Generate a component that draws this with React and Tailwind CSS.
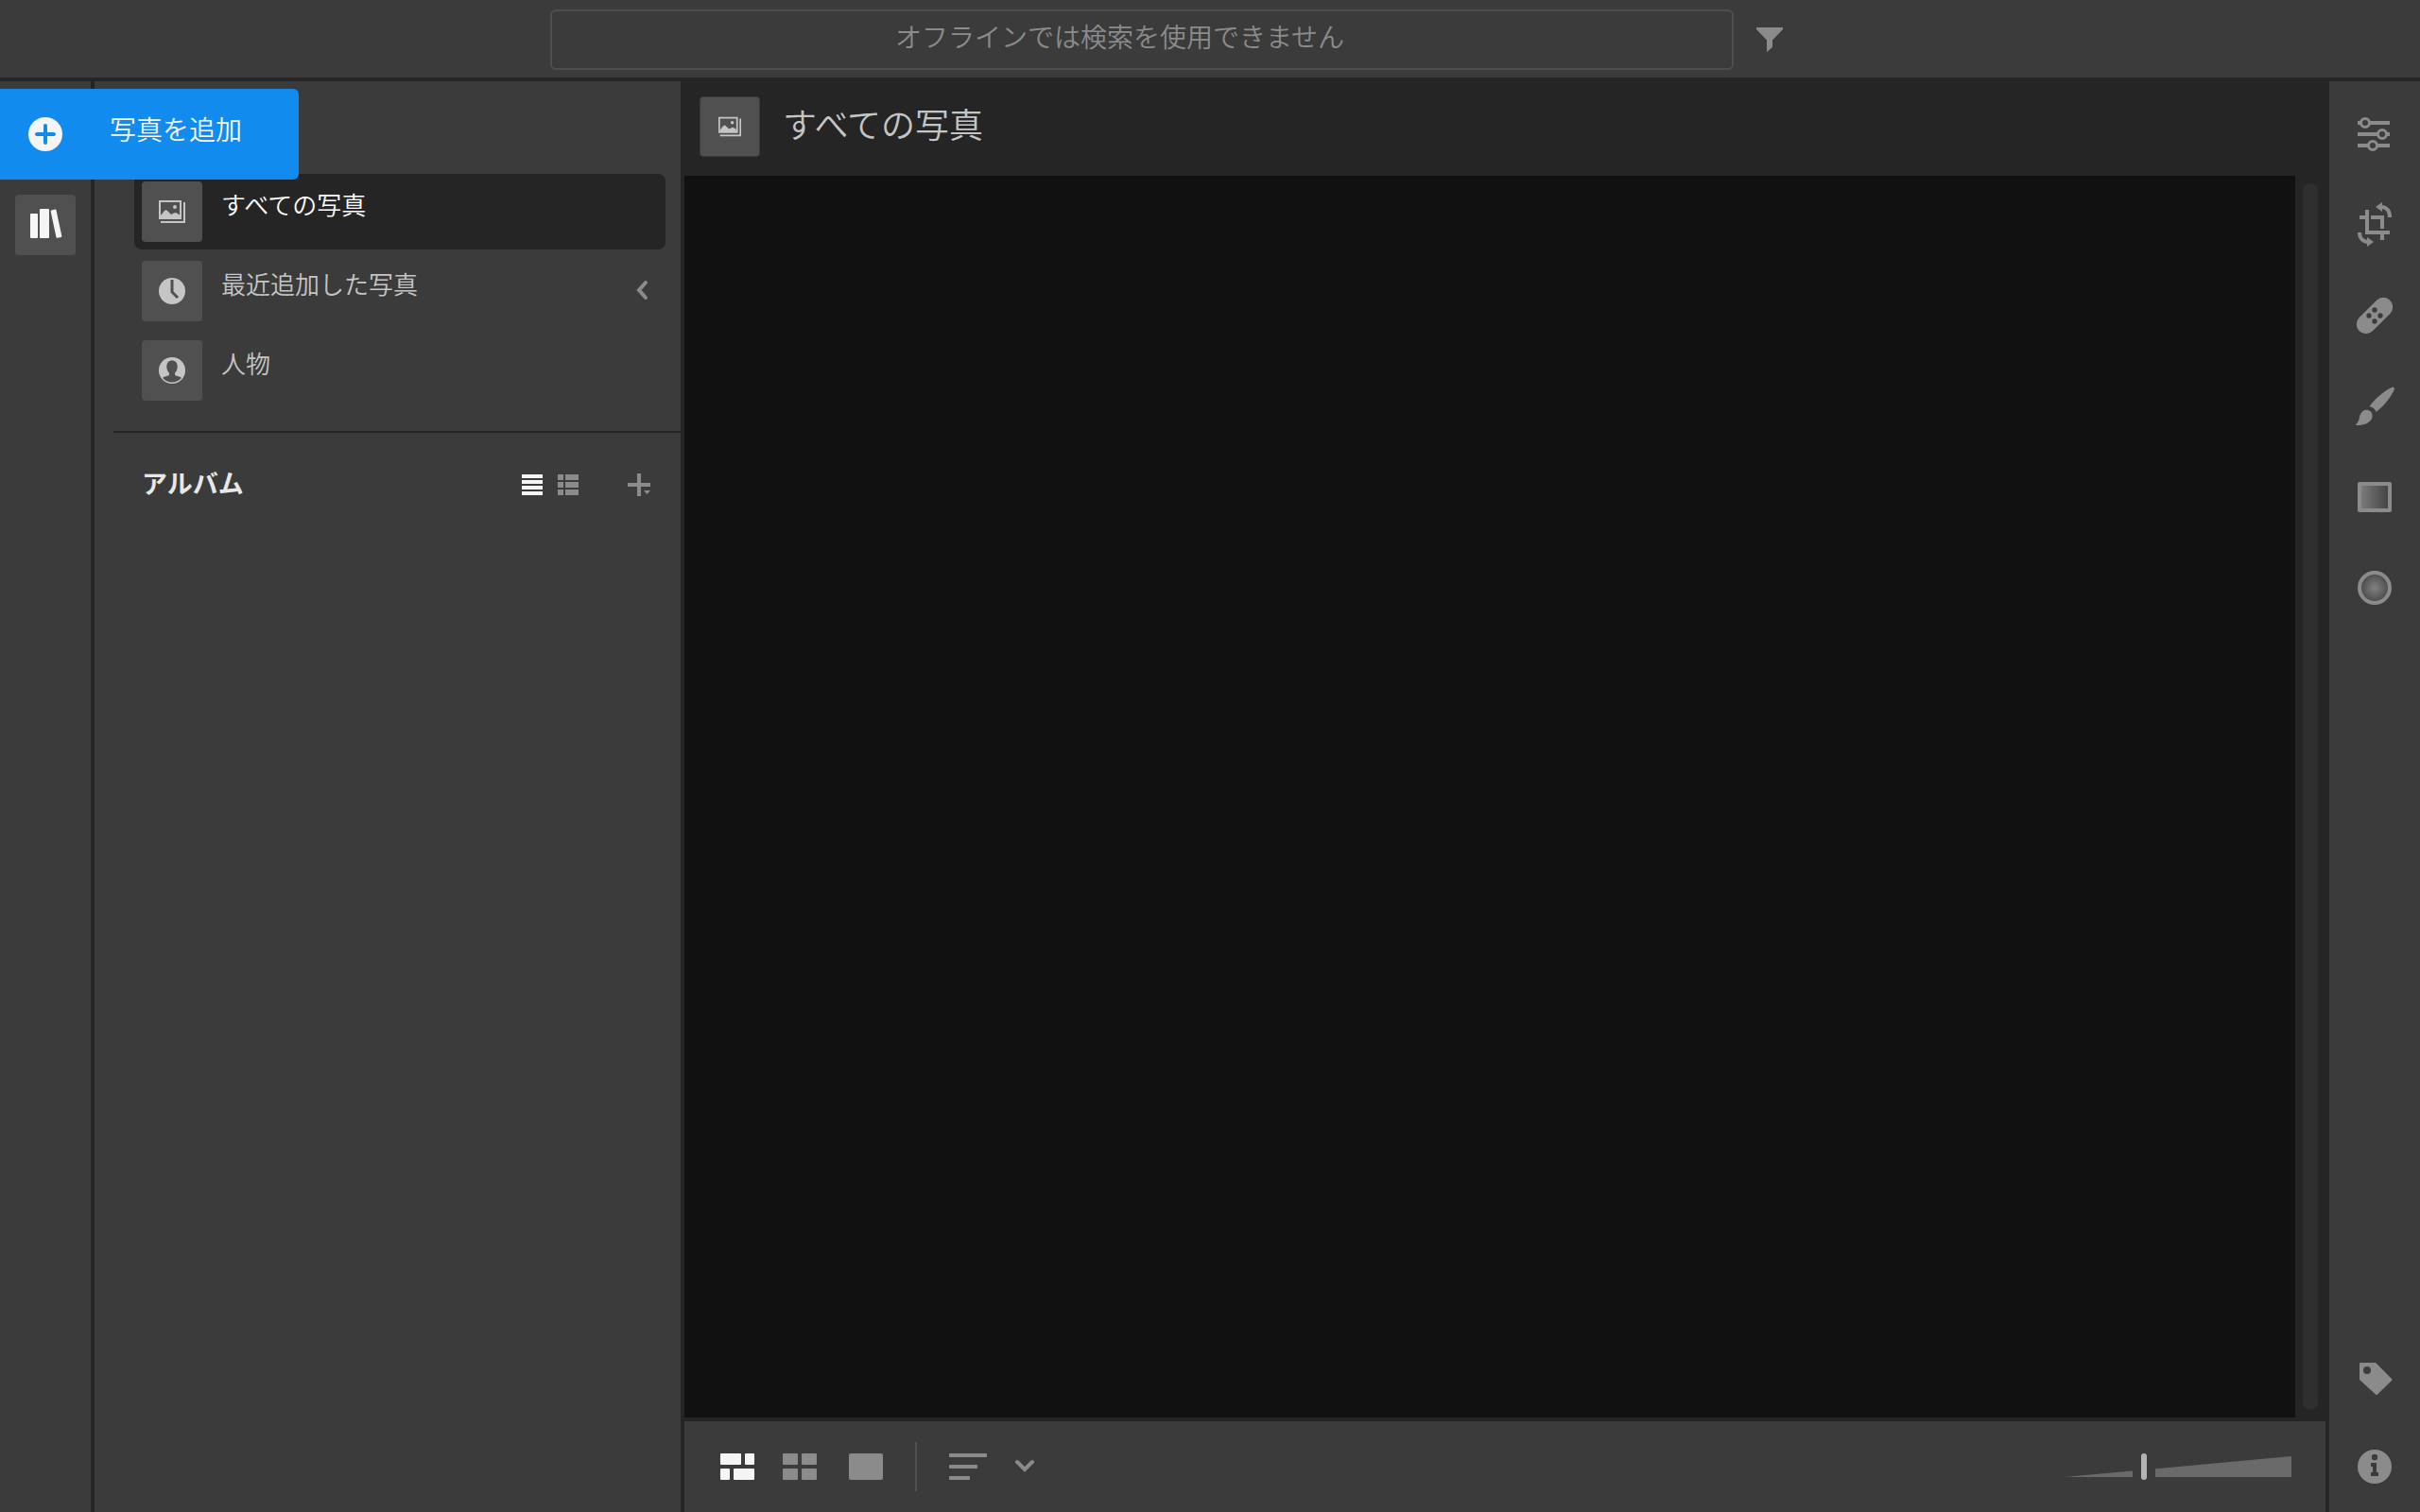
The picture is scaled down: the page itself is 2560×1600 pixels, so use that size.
import { useState } from 'react';

const PhotosIcon = ({ className }) => (
  <svg className={className} viewBox="0 0 28 24" fill="none">
    <path d="M26 2h2v22H2v-2h24z" fill="currentColor" />
    <path d="M1 1h22v18H1z" stroke="currentColor" strokeWidth="2" />
    <path d="M2 16l4-5q1.500-1.500 3 0l4 4 3-1.500q1.500-1 3 0l3 2V19H2z" fill="currentColor" />
    <circle cx="17" cy="7" r="2" fill="currentColor" />
  </svg>
);

const ClockIcon = ({ className }) => (
  <svg className={className} viewBox="0 0 28 28" fill="none">
    <circle cx="14" cy="14" r="14" fill="currentColor" />
    <path d="M14 2v13l6 6" stroke="#505050" strokeWidth="3" />
  </svg>
);

const PersonIcon = ({ className }) => (
  <svg className={className} viewBox="0 0 28 28">
    <circle cx="14" cy="14" r="14" fill="currentColor" />
    <path
      d="M14 3.500c-3.600 0-5.700 2.700-5.700 6.500 0 3 1.300 5.300 2.700 6.800v2c0 1-5.500 1.500-6.800 3.200C6.500 24.800 10 26.600 14 26.600s7.500-1.800 9.800-4.600c-1.300-1.700-6.800-2.200-6.800-3.200v-2c1.400-1.500 2.700-3.800 2.700-6.800 0-3.800-2.100-6.500-5.700-6.500z"
      fill="#505050"
    />
  </svg>
);

const PlusCircleIcon = () => (
  <svg className="size-9" viewBox="0 0 36 36">
    <circle cx="18" cy="18" r="18" fill="#f5f5f5" />
    <path d="M18 9v18M9 18h18" stroke="#118bee" strokeWidth="4" strokeLinecap="round" />
  </svg>
);

const LibraryIcon = () => (
  <svg className="h-8 w-9" viewBox="0 0 36 32" fill="#f5f5f5">
    <rect x="2" y="6" width="8" height="26" rx="1" />
    <rect x="12" y="1" width="10" height="31" rx="1" />
    <rect x="26.500" y="1.700" width="6" height="30" rx="1" transform="rotate(-12 29.500 16.700)" />
  </svg>
);

const FilterIcon = () => (
  <svg className="h-[26px] w-7" viewBox="0 0 28 26" fill="#8b8b8b">
    <path d="M0 0h28v2L17 13.500V21l-6 5V13.500L0 2z" />
  </svg>
);

const SlidersIcon = () => (
  <svg className="size-12" viewBox="0 0 48 48" fill="none" stroke="#8b8b8b" strokeWidth="4">
    <path d="M6 12h4M18 12h22M6 24h22M36 24h4M6 36h12M26 36h14" strokeLinecap="butt" />
    <circle cx="14" cy="12" r="4.500" strokeWidth="3" />
    <circle cx="32" cy="24" r="4.500" strokeWidth="3" />
    <circle cx="22" cy="36" r="4.500" strokeWidth="3" />
  </svg>
);

const CropIcon = () => (
  <svg className="size-12" viewBox="0 0 48 48" fill="none" stroke="#8b8b8b" strokeWidth="4">
    <path d="M8 16h6M16 8v24h24M20 16h12v12M32 34v6" />
    <path d="M31 5c6 0 9 4.500 9 11" />
    <path d="M25 5l7-5v10z" fill="#8b8b8b" stroke="none" />
    <path d="M8 32c0 6 4 10 10 10" />
    <path d="M23 42l-7-5v10z" fill="#8b8b8b" stroke="none" />
  </svg>
);

const HealIcon = () => (
  <svg className="size-12" viewBox="0 0 48 48">
    <rect x="1" y="14" width="46" height="20" rx="10" fill="#8b8b8b" transform="rotate(-45 24 24)" />
    <g fill="#3b3b3b">
      <circle cx="24" cy="18" r="2.700" />
      <circle cx="18" cy="24" r="2.700" />
      <circle cx="30" cy="24" r="2.700" />
      <circle cx="24" cy="30" r="2.700" />
    </g>
  </svg>
);

const BrushIcon = () => (
  <svg className="size-12" viewBox="0 0 48 48" fill="#8b8b8b">
    <path d="M44.500 4c1 1 0 3-1 5-4 7.500-10 15-18 21-1-3-3-5-7-6C26 14.500 33 9 40 5c2-1 3.500-1.800 4.500-1z" />
    <path d="M4 43.500c3-3 3.500-6 4.500-10 1.500-4.500 5-6.500 8.500-5.500 4 1 5.500 5 4 9C18.500 42 12 44.500 4 44z" />
  </svg>
);

const LinearIcon = () => (
  <svg className="size-12" viewBox="0 0 48 48">
    <defs>
      <linearGradient id="linear">
        <stop offset="0" stopColor="#7a7a7a" />
        <stop offset="1" stopColor="#454545" />
      </linearGradient>
    </defs>
    <rect x="6" y="8" width="36" height="32" rx="2" fill="#8b8b8b" />
    <rect x="10" y="12" width="28" height="24" fill="url(#linear)" />
  </svg>
);

const RadialIcon = () => (
  <svg className="size-12" viewBox="0 0 48 48">
    <defs>
      <radialGradient id="radial">
        <stop offset="0" stopColor="#828282" />
        <stop offset="1" stopColor="#484848" />
      </radialGradient>
    </defs>
    <circle cx="24" cy="24" r="16" fill="url(#radial)" stroke="#8b8b8b" strokeWidth="4" />
  </svg>
);

const TagIcon = () => (
  <svg className="size-12" viewBox="0 0 48 48">
    <path d="M9 10h16l17 17q1 1 0 2L27 43.500q-1 1-2 0L8 28V11q0-1 1-1z" fill="#8b8b8b" />
    <circle cx="16" cy="18" r="4" fill="#3b3b3b" />
  </svg>
);

const InfoIcon = () => (
  <svg className="size-12" viewBox="0 0 48 48">
    <circle cx="24" cy="24" r="18" fill="#8b8b8b" />
    <circle cx="24" cy="14" r="3.200" fill="#3b3b3b" />
    <path d="M20 20h6v10h2v4h-8v-4h2v-6h-2z" fill="#3b3b3b" />
  </svg>
);

const tools = [
  { label: '編集', Icon: SlidersIcon },
  { label: '切り抜き', Icon: CropIcon },
  { label: '修復ブラシ', Icon: HealIcon },
  { label: 'ブラシ', Icon: BrushIcon },
  { label: '線形グラデーション', Icon: LinearIcon },
  { label: '円形グラデーション', Icon: RadialIcon },
];

const panels = [
  { label: 'キーワード', Icon: TagIcon },
  { label: '情報', Icon: InfoIcon },
];

const sources = [
  { label: 'すべての写真', Icon: PhotosIcon, size: 'h-6 w-7', active: true },
  { label: '最近追加した写真', Icon: ClockIcon, size: 'size-7', collapsed: true },
  { label: '人物', Icon: PersonIcon, size: 'size-7' },
];

function Header() {
  return (
    <header className="grid h-[86px] shrink-0 grid-cols-[582px_1fr_726px] items-start border-b-4 border-[#252525] pt-[10px]">
      <input
        type="search"
        disabled
        aria-label="検索"
        placeholder="オフラインでは検索を使用できません"
        className="col-start-2 h-16 w-full rounded-md border-2 border-[#4e4e4e] pr-6 pb-2 text-center text-[28px] font-[350] placeholder:text-[#8b8b8b]"
      />
      <button aria-label="フィルター" className="ml-6 flex h-16 w-7 items-center justify-center">
        <FilterIcon />
      </button>
    </header>
  );
}

function Rail() {
  return (
    <nav className="relative z-10 w-[100px] shrink-0 border-r-4 border-[#252525] pt-2">
      <button className="flex h-24 w-[316px] items-center gap-[50px] rounded-r-md bg-[#118bee] pl-[30px] text-[#f5f5f5]">
        <PlusCircleIcon />
        <span className="pb-3 text-[28px] leading-10 font-[350]">写真を追加</span>
      </button>
      <button aria-label="ライブラリ" className="m-4 flex size-16 items-center justify-center rounded bg-[#505050] pb-1">
        <LibraryIcon />
      </button>
    </nav>
  );
}

function Sidebar() {
  return (
    <aside className="w-[624px] shrink-0 border-r-4 border-[#252525] pt-[98px]">
      <ul className="mr-4 ml-[42px] space-y-1">
        {sources.map(({ label, Icon, size, active, collapsed }) => (
          <li key={label}>
            <button
              className={`flex h-20 w-full items-center gap-5 rounded-lg px-2 text-left ${
                active ? 'bg-[#252525] text-white' : 'text-[#c5c5c5]'
              }`}
            >
              <span className="flex size-16 items-center justify-center rounded bg-[#505050] text-[#c5c5c5]">
                <Icon className={size} />
              </span>
              <span className="flex-1 pb-4 text-[26px] leading-9 font-[350]">{label}</span>
              {collapsed && (
                <svg className="mr-2 h-6 w-4" viewBox="0 0 16 24" fill="none">
                  <path d="M11 3L4 11l7 8" stroke="#8b8b8b" strokeWidth="4" strokeLinecap="round" />
                </svg>
              )}
            </button>
          </li>
        ))}
      </ul>

      <section className="mt-6 ml-5 border-t-2 border-[#252525]">
        <div className="flex h-[110px] items-center pr-8 pl-[30px]">
          <h2 className="flex-1 pb-1 text-[27px] leading-10 font-bold text-[#e8e8e8]">アルバム</h2>
          <button aria-label="リスト表示" className="mr-4">
            <svg className="h-[22px] w-[22px]" viewBox="0 0 22 22">
              <path d="M0 0h22v4H0zM0 6h22v4H0zM0 12h22v4H0zM0 18h22v4H0z" fill="#f5f5f5" />
            </svg>
          </button>
          <button aria-label="詳細表示" className="mr-[52px]">
            <svg className="h-[22px] w-[22px]" viewBox="0 0 22 22">
              <path d="M0 0h6v6H0zM8 0h14v6H8zM0 8h6v6H0zM8 8h14v6H8zM0 16h6v6H0zM8 16h14v6H8z" fill="#8b8b8b" />
            </svg>
          </button>
          <button aria-label="アルバムを作成">
            <svg className="size-6" viewBox="0 0 24 24" fill="#8b8b8b">
              <path d="M10 0h4v10h10v4H14v10h-4V14H0v-4h10zM17 18h7l-3.500 4z" />
            </svg>
          </button>
        </div>
      </section>
    </aside>
  );
}

function SizeSlider() {
  const [size, setSize] = useState(9);
  const thumb = 3 + size * 9;

  return (
    <div className="relative h-7 w-60">
      <svg className="h-7 w-60" viewBox="0 0 240 28">
        <path d="M0 25L240 3v22z" fill="#6a6a6a" />
        <rect x={thumb - 12} width="24" height="28" fill="#3b3b3b" />
      </svg>
      <input
        type="range"
        min="0"
        max="26"
        value={size}
        onChange={(e) => setSize(Number(e.target.value))}
        aria-label="サムネールのサイズ"
        className="absolute inset-0 h-7 w-full appearance-none bg-transparent [&::-webkit-slider-thumb]:h-7 [&::-webkit-slider-thumb]:w-[6px] [&::-webkit-slider-thumb]:appearance-none [&::-webkit-slider-thumb]:rounded-full [&::-webkit-slider-thumb]:bg-[#b4b4b4]"
      />
    </div>
  );
}

function Toolbar() {
  return (
    <footer className="mr-1 flex h-24 shrink-0 items-center bg-[#3b3b3b] pr-9 pl-[38px]">
      <button aria-label="フォトグリッド">
        <svg className="h-7 w-9" viewBox="0 0 36 28" fill="#f5f5f5">
          <rect width="22" height="12" rx="1" />
          <rect x="26" width="10" height="12" rx="1" />
          <rect y="16" width="10" height="12" rx="1" />
          <rect x="14" y="16" width="22" height="12" rx="1" />
        </svg>
      </button>
      <button aria-label="正方形グリッド" className="ml-[30px]">
        <svg className="h-7 w-9" viewBox="0 0 36 28" fill="#8b8b8b">
          <rect width="16" height="12" rx="1" />
          <rect x="20" width="16" height="12" rx="1" />
          <rect y="16" width="16" height="12" rx="1" />
          <rect x="20" y="16" width="16" height="12" rx="1" />
        </svg>
      </button>
      <button aria-label="ディテール" className="ml-[34px] h-7 w-9 rounded-xs bg-[#8b8b8b]" />
      <div className="mx-[34px] h-[52px] w-[2px] bg-[#505050]" />
      <button aria-label="並べ替え" className="flex items-center gap-[30px]">
        <svg className="h-7 w-10" viewBox="0 0 40 28" fill="#8b8b8b">
          <rect width="40" height="4" rx="1" />
          <rect y="12" width="30" height="4" rx="1" />
          <rect y="24" width="22" height="4" rx="1" />
        </svg>
        <svg className="h-4 w-5" viewBox="0 0 20 16" fill="none">
          <path d="M2 3l8 8 8-8" stroke="#8b8b8b" strokeWidth="4" strokeLinecap="round" />
        </svg>
      </button>
      <div className="flex-1" />
      <SizeSlider />
    </footer>
  );
}

export default function App() {
  return (
    <div className="flex h-screen flex-col overflow-hidden bg-[#3b3b3b] font-['Noto_Sans_CJK_JP',sans-serif]">
      <Header />
      <div className="flex min-h-0 flex-1">
        <Rail />
        <Sidebar />

        <main className="flex min-w-0 flex-1 flex-col bg-[#252525]">
          <div className="flex h-[100px] shrink-0 items-center gap-6 px-4 pb-1">
            <span className="flex size-16 items-center justify-center rounded border border-[#3b3b3b] bg-[#505050] text-[#c5c5c5]">
              <PhotosIcon className="h-[22px] w-6" />
            </span>
            <h1 className="pb-2 text-[36px] leading-[48px] font-[350] text-[#c5c5c5]">すべての写真</h1>
          </div>
          <div className="mb-1 flex min-h-0 flex-1">
            <div className="flex-1 bg-[#111111]" />
            <div className="mx-2 my-2 w-4 rounded-full bg-[#2f2f2f]" />
            <div className="w-1" />
          </div>
          <Toolbar />
        </main>

        <nav className="flex w-24 shrink-0 flex-col pt-2">
          {tools.map(({ label, Icon }) => (
            <button key={label} aria-label={label} className="flex h-24 items-center justify-center">
              <Icon />
            </button>
          ))}
          <div className="flex-1" />
          {panels.map(({ label, Icon }) => (
            <button key={label} aria-label={label} className="flex h-24 items-center justify-center">
              <Icon />
            </button>
          ))}
        </nav>
      </div>
    </div>
  );
}
